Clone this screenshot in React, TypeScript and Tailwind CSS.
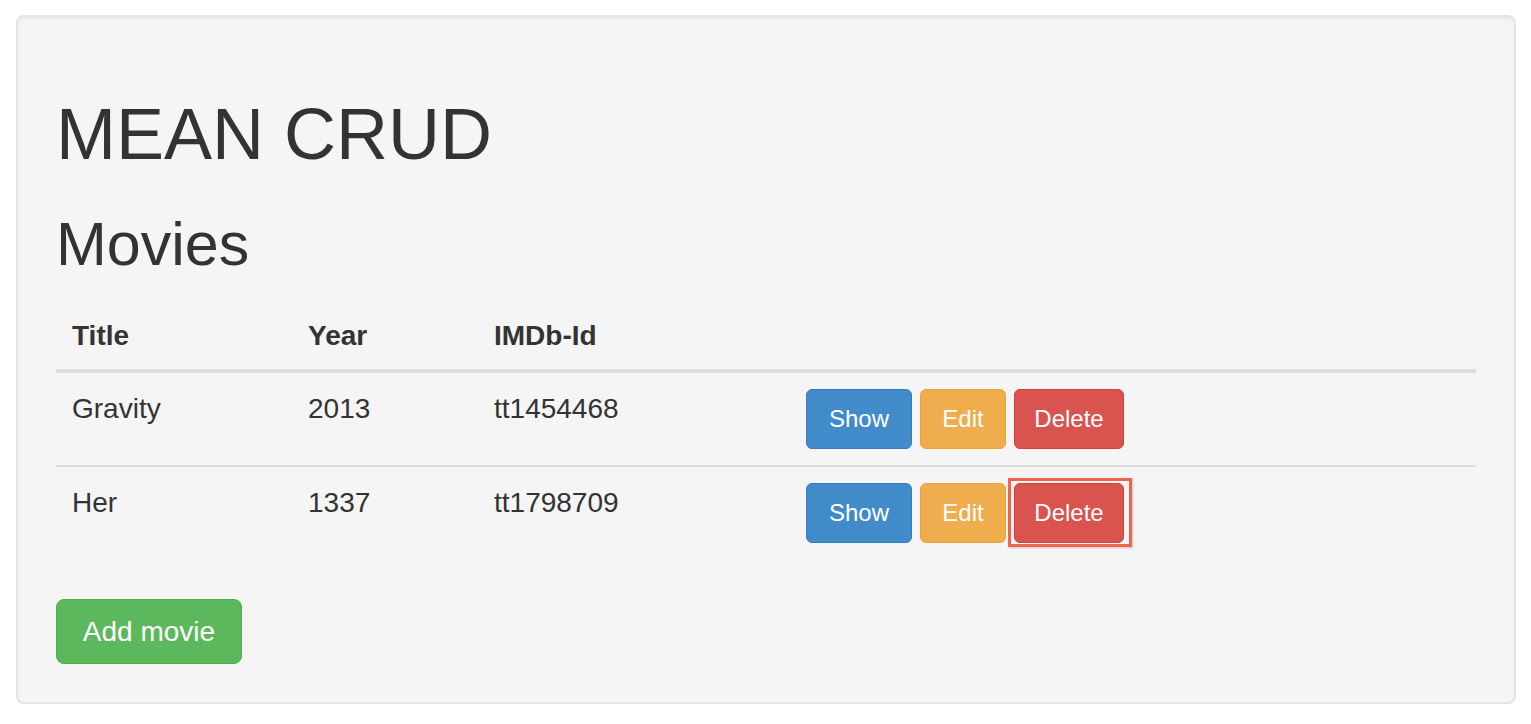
import React from "react";

const movies = [
  { title: "Gravity", year: "2013", imdb: "tt1454468" },
  { title: "Her", year: "1337", imdb: "tt1798709" },
];

function SmallBtn({ label, color, w, focus }: { label: string; color: string; w: string; focus?: boolean }) {
  return (
    <button
      className={`${color} ${w} ${focus ? "before:content-[''] before:absolute before:-left-[7px] before:-right-[9px] before:-top-[6px] before:-bottom-[5px] before:border-[3px] before:border-[#f2634f] before:shadow-[1px_1px_2px_rgba(0,0,0,0.18)] before:pointer-events-none" : ""} relative h-[60px] rounded-[6px] border text-white text-[24px] leading-[36px] text-center`}
    >
      {label}
    </button>
  );
}

export default function App() {
  return (
    <div className="min-h-[724px] bg-white pt-[15px] pl-[16px]" style={{ fontFamily: '"Liberation Sans", Arial, Helvetica, sans-serif' }}>
      <div className="w-[1500px] h-[689px] bg-[#f5f5f5] border-2 border-[#e4e4e4] rounded-[8px] shadow-[inset_0_2px_2px_rgba(0,0,0,0.05)] px-[38px] pt-[38px] text-[#333333]">
        <h1 className="mt-[40px] text-[72px] leading-[79px] font-normal">MEAN CRUD</h1>
        <h2 className="mt-[37px] text-[61px] leading-[66px] font-normal">Movies</h2>
        <table className="mt-[20px] w-full border-collapse text-[28px] leading-[40px]">
          <thead>
            <tr className="border-b-4 border-[#dddddd]">
              <th className="w-[236px] text-left font-bold pl-[16px] pt-[19px] pb-[13px]">Title</th>
              <th className="w-[186px] text-left font-bold pl-[16px] pt-[19px] pb-[13px]">Year</th>
              <th className="w-[312px] text-left font-bold pl-[16px] pt-[19px] pb-[13px]">IMDb-Id</th>
              <th className="pl-[16px]"></th>
            </tr>
          </thead>
          <tbody>
            {movies.map((m, i) => (
              <tr key={m.imdb} className={i === 0 ? "border-b-2 border-[#dddddd]" : ""}>
                <td className="align-top pl-[16px] py-[16px]">{m.title}</td>
                <td className="align-top pl-[16px] py-[16px]">{m.year}</td>
                <td className="align-top pl-[16px] py-[16px]">{m.imdb}</td>
                <td className="align-top pl-[16px] py-[16px]">
                  <div className="flex gap-[8px]">
                    <SmallBtn label="Show" color="bg-[#428bca] border-[#357ebd]" w="w-[106px]" />
                    <SmallBtn label="Edit" color="bg-[#f0ad4e] border-[#eea236]" w="w-[86px]" />
                    <SmallBtn label="Delete" color="bg-[#d9534f] border-[#d43f3a]" w="w-[110px]" focus={i === 1} />
                  </div>
                </td>
              </tr>
            ))}
          </tbody>
        </table>
        <button className="mt-[40px] w-[186px] h-[65px] rounded-[8px] bg-[#5cb85c] border border-[#4cae4c] text-white text-[28px] leading-[40px] text-center">
          Add movie
        </button>
      </div>
    </div>
  );
}
